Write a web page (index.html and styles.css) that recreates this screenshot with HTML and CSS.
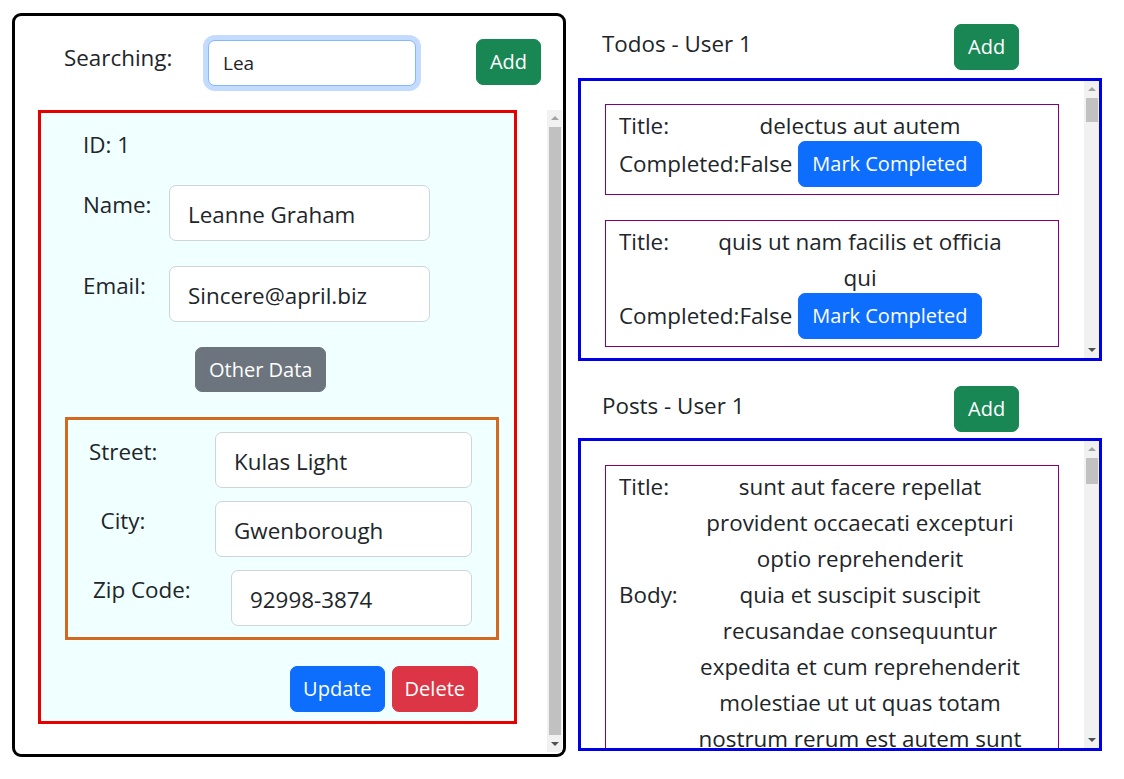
FILE: index.html
```html
<!DOCTYPE html>
<html lang="en">
<head>
<meta charset="utf-8">
<title>Users</title>
<link rel="stylesheet" href="styles.css">
</head>
<body>
<div class="app">
  <section class="users-panel">
    <div class="search-bar">
      <label class="search-label">Searching:</label>
      <input class="search-input" type="text" value="Lea">
      <button class="btn btn-success search-add">Add</button>
    </div>
    <div class="users-scroll">
      <div class="viewport">
        <div class="user-card">
          <div class="user-id">ID: 1</div>
          <div class="field-row">
            <label class="field-label">Name:</label>
            <input class="field-input" type="text" value="Leanne Graham">
          </div>
          <div class="field-row">
            <label class="field-label">Email:</label>
            <input class="field-input" type="text" value="Sincere@april.biz">
          </div>
          <button class="btn btn-secondary other-btn">Other Data</button>
          <div class="address-box">
            <div class="addr-row">
              <label class="addr-label">Street:</label>
              <input class="field-input addr-input" type="text" value="Kulas Light">
            </div>
            <div class="addr-row">
              <label class="addr-label">City:</label>
              <input class="field-input addr-input" type="text" value="Gwenborough">
            </div>
            <div class="addr-row">
              <label class="addr-label addr-label-zip">Zip Code:</label>
              <input class="field-input addr-input addr-input-narrow" type="text" value="92998-3874">
            </div>
          </div>
          <div class="card-actions">
            <button class="btn btn-primary">Update</button>
            <button class="btn btn-danger">Delete</button>
          </div>
        </div>
      </div>
      <div class="scrollbar">
        <div class="sb-btn"><span class="arrow-up"></span></div>
        <div class="sb-track"><div class="sb-thumb thumb-users"></div></div>
        <div class="sb-btn"><span class="arrow-down"></span></div>
      </div>
    </div>
  </section>

  <section class="side">
    <div class="list-block">
      <div class="list-head">
        <span class="list-title">Todos - User 1</span>
        <button class="btn btn-success">Add</button>
      </div>
      <div class="list-box todos-box">
        <div class="viewport list-viewport">
          <div class="item"><div class="kv"><span>Title:</span><span class="kv-value">delectus aut autem</span></div><div class="done-row"><span>Completed:</span><span>False</span><button class="btn btn-primary mark-btn">Mark Completed</button></div></div>
          <div class="item"><div class="kv"><span>Title:</span><span class="kv-value">quis ut nam facilis et officia<br>qui</span></div><div class="done-row"><span>Completed:</span><span>False</span><button class="btn btn-primary mark-btn">Mark Completed</button></div></div>
          <div class="item"><div class="kv"><span>Title:</span><span class="kv-value">fugiat veniam minus</span></div><div class="done-row"><span>Completed:</span><span>False</span><button class="btn btn-primary mark-btn">Mark Completed</button></div></div>
          <div class="item"><div class="kv"><span>Title:</span><span class="kv-value">et porro tempora</span></div><div class="done-row done-true"><span>Completed:</span><span>True</span></div></div>
          <div class="item"><div class="kv"><span>Title:</span><span class="kv-value">laboriosam mollitia et enim quasi adipisci quia provident illum</span></div><div class="done-row"><span>Completed:</span><span>False</span><button class="btn btn-primary mark-btn">Mark Completed</button></div></div>
          <div class="item"><div class="kv"><span>Title:</span><span class="kv-value">qui ullam ratione quibusdam voluptatem quia omnis</span></div><div class="done-row"><span>Completed:</span><span>False</span><button class="btn btn-primary mark-btn">Mark Completed</button></div></div>
          <div class="item"><div class="kv"><span>Title:</span><span class="kv-value">illo expedita consequatur quia in</span></div><div class="done-row"><span>Completed:</span><span>False</span><button class="btn btn-primary mark-btn">Mark Completed</button></div></div>
          <div class="item"><div class="kv"><span>Title:</span><span class="kv-value">quo adipisci enim quam ut ab</span></div><div class="done-row done-true"><span>Completed:</span><span>True</span></div></div>
          <div class="item"><div class="kv"><span>Title:</span><span class="kv-value">molestiae perspiciatis ipsa</span></div><div class="done-row"><span>Completed:</span><span>False</span><button class="btn btn-primary mark-btn">Mark Completed</button></div></div>
          <div class="item"><div class="kv"><span>Title:</span><span class="kv-value">illo est ratione doloremque quia maiores aut</span></div><div class="done-row done-true"><span>Completed:</span><span>True</span></div></div>
          <div class="item"><div class="kv"><span>Title:</span><span class="kv-value">vero rerum temporibus dolor</span></div><div class="done-row done-true"><span>Completed:</span><span>True</span></div></div>
          <div class="item"><div class="kv"><span>Title:</span><span class="kv-value">ipsa repellendus fugit nisi</span></div><div class="done-row done-true"><span>Completed:</span><span>True</span></div></div>
          <div class="item"><div class="kv"><span>Title:</span><span class="kv-value">et doloremque nulla</span></div><div class="done-row"><span>Completed:</span><span>False</span><button class="btn btn-primary mark-btn">Mark Completed</button></div></div>
          <div class="item"><div class="kv"><span>Title:</span><span class="kv-value">repellendus sunt dolores architecto voluptatum</span></div><div class="done-row done-true"><span>Completed:</span><span>True</span></div></div>
          <div class="item"><div class="kv"><span>Title:</span><span class="kv-value">ab voluptatum amet voluptas</span></div><div class="done-row done-true"><span>Completed:</span><span>True</span></div></div>
          <div class="item"><div class="kv"><span>Title:</span><span class="kv-value">accusamus eos facilis sint et aut voluptatem</span></div><div class="done-row done-true"><span>Completed:</span><span>True</span></div></div>
          <div class="item"><div class="kv"><span>Title:</span><span class="kv-value">quo laboriosam deleniti aut qui</span></div><div class="done-row done-true"><span>Completed:</span><span>True</span></div></div>
          <div class="item"><div class="kv"><span>Title:</span><span class="kv-value">dolorum est consequatur ea mollitia in culpa</span></div><div class="done-row"><span>Completed:</span><span>False</span><button class="btn btn-primary mark-btn">Mark Completed</button></div></div>
          <div class="item"><div class="kv"><span>Title:</span><span class="kv-value">molestiae ipsa aut voluptatibus pariatur dolor nihil</span></div><div class="done-row done-true"><span>Completed:</span><span>True</span></div></div>
          <div class="item"><div class="kv"><span>Title:</span><span class="kv-value">ullam nobis libero sapiente ad optio sint</span></div><div class="done-row done-true"><span>Completed:</span><span>True</span></div></div>
        </div>
        <div class="scrollbar">
          <div class="sb-btn"><span class="arrow-up"></span></div>
          <div class="sb-track"><div class="sb-thumb thumb-small"></div></div>
          <div class="sb-btn"><span class="arrow-down"></span></div>
        </div>
      </div>
    </div>

    <div class="list-block list-block-posts">
      <div class="list-head list-head-posts">
        <span class="list-title">Posts - User 1</span>
        <button class="btn btn-success">Add</button>
      </div>
      <div class="list-box posts-box">
        <div class="viewport list-viewport posts-viewport">
          <div class="item"><div class="kv"><span>Title:</span><span class="kv-value">sunt aut facere repellat<br>provident occaecati excepturi<br>optio reprehenderit</span><span>Body:</span><span class="kv-value">quia et suscipit suscipit<br>recusandae consequuntur<br>expedita et cum reprehenderit<br>molestiae ut ut quas totam<br>nostrum rerum est autem sunt<br>rem eveniet architecto</span></div></div>
          <div class="item"><div class="kv"><span>Title:</span><span class="kv-value">qui est esse</span><span>Body:</span><span class="kv-value">est rerum tempore vitae sequi sint nihil reprehenderit dolor beatae ea dolores neque fugiat blanditiis voluptate porro vel nihil molestiae ut reiciendis qui aperiam non debitis possimus qui neque nisi nulla</span></div></div>
          <div class="item"><div class="kv"><span>Title:</span><span class="kv-value">ea molestias quasi exercitationem repellat qui ipsa sit aut</span><span>Body:</span><span class="kv-value">et iusto sed quo iure voluptatem occaecati omnis eligendi aut ad voluptatem doloribus vel accusantium quis pariatur molestiae porro eius odio et labore et velit aut</span></div></div>
          <div class="item"><div class="kv"><span>Title:</span><span class="kv-value">eum et est occaecati</span><span>Body:</span><span class="kv-value">ullam et saepe reiciendis voluptatem adipisci sit amet autem assumenda provident rerum culpa quis hic commodi nesciunt rem tenetur doloremque ipsam iure quis sunt voluptatem rerum illo velit</span></div></div>
          <div class="item"><div class="kv"><span>Title:</span><span class="kv-value">nesciunt quas odio</span><span>Body:</span><span class="kv-value">repudiandae veniam quaerat sunt sed alias aut fugiat sit autem sed est voluptatem omnis possimus esse voluptatibus quis est aut tenetur dolor neque</span></div></div>
          <div class="item"><div class="kv"><span>Title:</span><span class="kv-value">dolorem eum magni eos aperiam quia</span><span>Body:</span><span class="kv-value">ut aspernatur corporis harum nihil quis provident sequi mollitia nobis aliquid molestiae perspiciatis et ea nemo ab reprehenderit accusantium quas voluptate dolores velit et doloremque molestiae</span></div></div>
          <div class="item"><div class="kv"><span>Title:</span><span class="kv-value">magnam facilis autem</span><span>Body:</span><span class="kv-value">dolore placeat quibusdam ea quo vitae magni quis enim qui quis quo nemo aut saepe quidem repellat excepturi ut quia sunt ut sequi eos ea sed quas</span></div></div>
          <div class="item"><div class="kv"><span>Title:</span><span class="kv-value">dolorem dolore est ipsam</span><span>Body:</span><span class="kv-value">dignissimos aperiam dolorem qui eum facilis quibusdam animi sint suscipit qui sint possimus cum quaerat magni maiores excepturi ipsam ut commodi dolor voluptatum modi aut vitae</span></div></div>
          <div class="item"><div class="kv"><span>Title:</span><span class="kv-value">nesciunt iure omnis dolorem tempora et accusantium</span><span>Body:</span><span class="kv-value">consectetur animi nesciunt iure dolore enim quia ad veniam autem ut quam aut nobis et est aut quod aut provident voluptas autem voluptas</span></div></div>
          <div class="item"><div class="kv"><span>Title:</span><span class="kv-value">optio molestias id quia eum</span><span>Body:</span><span class="kv-value">quo et expedita modi cum officia vel magni doloribus qui repudiandae vero nisi sit quos veniam quod sed accusamus veritatis error</span></div></div>
        </div>
        <div class="scrollbar">
          <div class="sb-btn"><span class="arrow-up"></span></div>
          <div class="sb-track"><div class="sb-thumb thumb-small thumb-posts"></div></div>
          <div class="sb-btn"><span class="arrow-down"></span></div>
        </div>
      </div>
    </div>
  </section>
</div>
</body>
</html>
```

FILE: styles.css
```css
body {
  margin: 0;
  font-family: "Open Sans", "Noto Sans", sans-serif;
  font-size: 22.4px;
  line-height: 36px;
  color: #212529;
  background: #fff;
}

.app {
  display: flex;
  align-items: flex-start;
  gap: 12px;
  padding-left: 12px;
}

/* ---------- buttons ---------- */
.btn {
  font-family: "Open Sans", "Noto Sans", sans-serif;
  font-size: 20px;
  line-height: 30px;
  padding: 7px 13px;
  border: 1px solid transparent;
  border-radius: 7px;
  color: #fff;
  cursor: pointer;
  margin: 0;
}
.btn-success { background: #198754; border-color: #198754; }
.btn-secondary { background: #6c757d; border-color: #6c757d; }
.btn-primary { background: #0d6efd; border-color: #0d6efd; }
.btn-danger { background: #dc3545; border-color: #dc3545; }

/* ---------- classic scrollbar ---------- */
.viewport {
  flex: 1;
  min-width: 0;
  overflow: hidden;
}
.scrollbar {
  width: 15px;
  flex: none;
  display: flex;
  flex-direction: column;
  background: #f1f1f1;
}
.sb-btn {
  height: 16px;
  flex: none;
  display: flex;
  align-items: center;
  justify-content: center;
}
.arrow-up {
  width: 0;
  height: 0;
  border-left: 4px solid transparent;
  border-right: 4px solid transparent;
  border-bottom: 4px solid #a3a3a3;
}
.arrow-down {
  width: 0;
  height: 0;
  border-left: 4px solid transparent;
  border-right: 4px solid transparent;
  border-top: 4px solid #505050;
}
.sb-track {
  flex: 1;
  display: flex;
  flex-direction: column;
  padding: 1px 1px 0 2px;
}
.sb-thumb { background: #c1c1c1; }
.thumb-users { flex: 1; margin-bottom: 1px; }
.thumb-small { height: 24px; }
.thumb-posts { height: 26px; }

/* ---------- left panel ---------- */
.users-panel {
  margin-top: 13px;
  width: 554px;
  height: 744px;
  box-sizing: border-box;
  border: 3px solid #000;
  border-radius: 9px;
  display: flex;
  flex-direction: column;
}

.search-bar {
  display: flex;
  align-items: flex-start;
  padding: 24px 22px 0 49px;
  margin-bottom: 24px;
}
.search-label { width: 144px; }
.search-input {
  box-sizing: border-box;
  width: 208px;
  height: 46px;
  margin: 0;
  padding: 0 14px;
  font-family: "Open Sans", "Noto Sans", sans-serif;
  font-size: 19px;
  color: #212529;
  border: 1px solid #86b7fe;
  border-radius: 7px;
  box-shadow: 0 0 0 5px rgba(13, 110, 253, 0.25);
  outline: none;
}
.search-add { margin-left: auto; margin-top: -1px; }

.users-scroll {
  flex: 1;
  min-height: 0;
  display: flex;
  margin-right: 1px;
  margin-bottom: 2px;
}

.user-card {
  margin: 0 0 0 23px;
  width: 479px;
  box-sizing: border-box;
  border: 3px solid #e60000;
  background: #f0ffff;
  padding: 14px 0 9px;
}
.user-id { padding-left: 42px; margin-bottom: 22px; }

.field-row {
  display: flex;
  align-items: flex-start;
  padding-left: 42px;
}
.field-row + .field-row { margin-top: 25px; }
.field-label { width: 86px; margin-top: 2px; }

.field-input {
  box-sizing: border-box;
  width: 261px;
  height: 56px;
  margin: 0;
  padding: 2px 18px 0;
  font-family: "Open Sans", "Noto Sans", sans-serif;
  font-size: 22.4px;
  color: #212529;
  background: #fff;
  border: 1px solid #ced4da;
  border-radius: 7px;
  outline: none;
}

.other-btn { display: block; margin: 25px 0 0 154px; padding: 7px 13px 6px; }

.address-box {
  margin: 25px 0 0 24px;
  width: 434px;
  box-sizing: border-box;
  border: 3px solid #d2691e;
  padding: 12px 0 11px;
}
.addr-row {
  display: flex;
  align-items: flex-start;
  padding: 0 24px 0 21px;
}
.addr-row + .addr-row { margin-top: 13px; }
.addr-label {
  width: 68px;
  text-align: center;
  margin-top: 2px;
  white-space: nowrap;
}
.addr-label-zip { margin-left: 4px; }
.addr-input { margin-left: auto; width: 257px; }
.addr-input-narrow { width: 241px; }

.card-actions {
  display: flex;
  justify-content: flex-end;
  gap: 7px;
  margin-top: 26px;
  padding-right: 36px;
}
.card-actions .btn { padding: 7px 12px; }

/* ---------- right side ---------- */
.side {
  width: 524px;
  padding-top: 24px;
}
.list-block-posts { margin-top: 25px; }
.list-head {
  display: flex;
  align-items: flex-start;
  padding-left: 24px;
  height: 46px;
  margin-bottom: 8px;
}
.list-head-posts { margin-bottom: 6px; }
.list-title { width: 352px; margin-top: 2px; }

.list-box {
  box-sizing: border-box;
  border: 3px solid #0000e6;
  display: flex;
}
.todos-box { height: 283px; }
.posts-box { height: 313px; }
.list-viewport { padding-top: 23px; }
.posts-viewport { padding-top: 24px; }

.item {
  width: 454px;
  margin: 0 0 25px 24px;
  box-sizing: border-box;
  border: 1px solid #800080;
  padding: 3px 13px 7px;
}
.kv {
  display: grid;
  grid-template-columns: 76px 330px;
}
.kv-value { text-align: center; }

.done-row {
  display: flex;
  align-items: center;
  margin-top: -3px;
}
.done-true { margin-top: 0; }
.mark-btn { margin-left: 6px; }
```
